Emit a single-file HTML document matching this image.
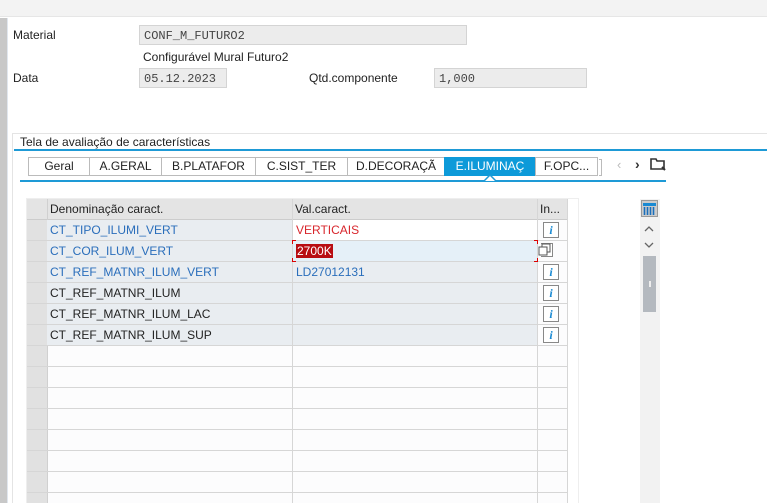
<!DOCTYPE html>
<html><head><meta charset="utf-8"><style>
*{margin:0;padding:0;box-sizing:border-box}
html,body{width:767px;height:503px;overflow:hidden}
body{background:#fff;font-family:"Liberation Sans",sans-serif;font-size:12px;color:#222;position:relative}
.a{position:absolute}
.inp{position:absolute;background:#ececec;border:1px solid #d4d4d4;font-family:"Liberation Mono",monospace;font-size:12px;color:#444;padding:3px 4px;height:20px}
.tab{position:absolute;top:157px;height:19px;border:1px solid #bbb;border-right:none;background:#fff;text-align:center;font-size:12px;line-height:17px;color:#222}
.row{position:absolute;left:27px;width:540px;height:21px;border-bottom:1px solid #d6d6d6}
.c{position:absolute;top:0;height:20px;line-height:20px;padding-left:3px;font-size:12px}
.info{position:absolute;left:543px;width:16px;height:16px;border:1px solid #888;background:#fff;color:#1a8ad3;font:bold italic 12px "Liberation Serif",serif;text-align:center;line-height:14px}
</style></head><body>
<div class="a" style="left:0;top:0;width:767px;height:17px;background:#f3f3f3;border-bottom:1px solid #e6e6e6"></div>
<div class="a" style="left:0;top:18px;width:7px;height:485px;background:#c8c8c8"></div>
<div class="a" style="left:7px;top:18px;width:1px;height:485px;background:#e0e6ee"></div>

<div class="a" style="left:13px;top:28px">Material</div>
<div class="inp" style="left:139px;top:25px;width:328px">CONF_M_FUTURO2</div>
<div class="a" style="left:143px;top:50px">Configurável Mural Futuro2</div>
<div class="a" style="left:13px;top:71px">Data</div>
<div class="inp" style="left:139px;top:68px;width:88px">05.12.2023</div>
<div class="a" style="left:309px;top:71px">Qtd.componente</div>
<div class="inp" style="left:434px;top:68px;width:153px">1,000</div>

<div class="a" style="left:12px;top:133px;width:755px;height:370px;border-left:1px solid #e4e4e4;border-top:1px solid #e4e4e4"></div>
<div class="a" style="left:20px;top:135px;font-size:12px">Tela de avaliação de características</div>
<div class="a" style="left:14px;top:149px;width:753px;height:2px;background:#1e9ad6"></div>

<div class="tab" style="left:28px;width:61px">Geral</div>
<div class="tab" style="left:89px;width:72px">A.GERAL</div>
<div class="tab" style="left:161px;width:94px">B.PLATAFOR</div>
<div class="tab" style="left:255px;width:92px">C.SIST_TER</div>
<div class="tab" style="left:347px;width:97px">D.DECORAÇÃ</div>
<div class="tab" style="left:444px;width:91px;background:#0d9ad9;color:#fff;border-color:#0d9ad9">E.ILUMINAÇ</div>
<div class="tab" style="left:535px;width:63px;border-right:1px solid #bbb">F.OPC...</div>
<div class="a" style="left:599px;top:159px;width:3px;height:17px;border:1px solid #bbb;border-left:none"></div>
<div class="a" style="left:617px;top:157px;color:#bbb;font-size:13px">‹</div>
<div class="a" style="left:635px;top:156px;color:#333;font-size:14px;font-weight:bold">›</div>
<svg class="a" style="left:650px;top:157px" width="16" height="14"><path d="M1 2h5l1 2h7v8H1z" fill="none" stroke="#333" stroke-width="1.6"/><path d="M12 10l3 3" stroke="#333" stroke-width="2"/></svg>
<div class="a" style="left:20px;top:180px;width:646px;height:2px;background:#1e9ad6"></div>
<svg class="a" style="left:484px;top:175px" width="12" height="7"><path d="M0 6L6 0L12 6" fill="#fff" stroke="#1e9ad6" stroke-width="1.5"/></svg>

<div class="a" style="left:26px;top:198px;width:553px;height:305px;border:1px solid #eee;border-bottom:none"></div>
<div class="a" style="left:27px;top:199px;width:20px;height:304px;background:#e1e1e1"></div>
<div class="a" style="left:47px;top:199px;width:520px;height:304px;background:#fcfcfd"></div>
<div class="row" style="top:199px;background:#e4e4e4;border-bottom:1px solid #ccc">
 <div class="c" style="left:20px">Denominação caract.</div>
 <div class="c" style="left:265px">Val.caract.</div>
 <div class="c" style="left:510px">In...</div>
</div>
<div class="a" style="left:47px;top:199px;width:1px;height:304px;background:#d0d0d0"></div>
<div class="a" style="left:292px;top:199px;width:1px;height:304px;background:#d6d6d6"></div>
<div class="a" style="left:537px;top:199px;width:1px;height:304px;background:#d6d6d6"></div>
<div class="a" style="left:567px;top:199px;width:1px;height:304px;background:#d6d6d6"></div>

<div class="row" style="top:220px"><div class="c" style="left:20px;width:245px;background:#e9edf1;color:#2a6ebb">CT_TIPO_ILUMI_VERT</div><div class="c" style="left:266px;width:244px;background:#fff;color:#d8262c">VERTICAIS</div></div>
<div class="row" style="top:241px"><div class="c" style="left:20px;width:245px;background:#e9edf1;color:#2a6ebb">CT_COR_ILUM_VERT</div><div class="c" style="left:266px;width:244px;background:#e5f0f8"><span style="background:#b80d12;color:#fff;padding:0 1px">2700K</span></div></div>
<div class="row" style="top:262px"><div class="c" style="left:20px;width:245px;background:#e9edf1;color:#2a6ebb">CT_REF_MATNR_ILUM_VERT</div><div class="c" style="left:266px;width:244px;background:#e9edf1;color:#2a6ebb">LD27012131</div></div>
<div class="row" style="top:283px"><div class="c" style="left:20px;width:245px;background:#e9edf1">CT_REF_MATNR_ILUM</div><div class="c" style="left:266px;width:244px;background:#e9edf1"></div></div>
<div class="row" style="top:304px"><div class="c" style="left:20px;width:245px;background:#e9edf1">CT_REF_MATNR_ILUM_LAC</div><div class="c" style="left:266px;width:244px;background:#e9edf1"></div></div>
<div class="row" style="top:325px"><div class="c" style="left:20px;width:245px;background:#e9edf1">CT_REF_MATNR_ILUM_SUP</div><div class="c" style="left:266px;width:244px;background:#e9edf1"></div></div>
<div class="row" style="top:346px"></div><div class="row" style="top:367px"></div><div class="row" style="top:388px"></div><div class="row" style="top:409px"></div><div class="row" style="top:430px"></div><div class="row" style="top:451px"></div><div class="row" style="top:472px"></div>

<div class="info" style="top:222px">i</div>
<div class="a" style="left:541px;top:243px;width:12px;height:14px;border:1px solid #888;border-left:none;background:#fff"></div>
<svg class="a" style="left:538px;top:243px" width="14" height="14"><rect x="4" y="1" width="8" height="8" fill="#fff" stroke="#555"/><rect x="1" y="4" width="8" height="8" fill="#fff" stroke="#555"/></svg>
<div class="info" style="top:264px">i</div>
<div class="info" style="top:285px">i</div>
<div class="info" style="top:306px">i</div>
<div class="info" style="top:327px">i</div>
<div class="a" style="left:292px;top:240px;width:4px;height:4px;border-left:1px solid #d00;border-top:1px solid #d00"></div>
<div class="a" style="left:292px;top:258px;width:4px;height:4px;border-left:1px solid #d00;border-bottom:1px solid #d00"></div>
<div class="a" style="left:534px;top:240px;width:4px;height:4px;border-right:1px solid #d00;border-top:1px solid #d00"></div>
<div class="a" style="left:534px;top:258px;width:4px;height:4px;border-right:1px solid #d00;border-bottom:1px solid #d00"></div>

<div class="a" style="left:640px;top:199px;width:20px;height:304px;background:#f2f2f2"></div>
<div class="a" style="left:641px;top:200px;width:17px;height:17px;background:#ccc;border:1px solid #999"></div>
<svg class="a" style="left:643px;top:203px" width="13" height="12"><rect x="0" y="0" width="13" height="3" fill="#1a8ad3"/><path d="M1.5 4v8M4.5 4v8M7.5 4v8M10.5 4v8" stroke="#1a6ebb" stroke-width="1.6"/></svg>
<svg class="a" style="left:644px;top:226px" width="10" height="6"><path d="M1 5L5 1L9 5" fill="none" stroke="#666" stroke-width="1.3"/></svg>
<svg class="a" style="left:644px;top:242px" width="10" height="6"><path d="M1 1L5 5L9 1" fill="none" stroke="#666" stroke-width="1.3"/></svg>
<div class="a" style="left:643px;top:256px;width:13px;height:56px;background:#b4b9bf"></div>
<div class="a" style="left:649px;top:281px;width:2px;height:6px;background:#eee"></div>
</body></html>
